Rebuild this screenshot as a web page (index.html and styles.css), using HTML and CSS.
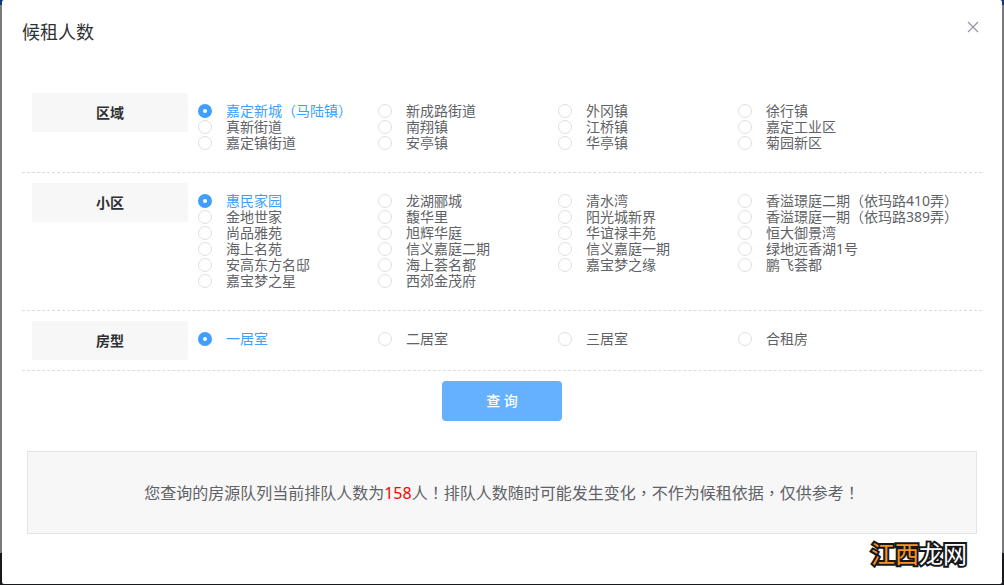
FILE: index.html
```
<!DOCTYPE html>
<html lang="zh-CN">
<head>
<meta charset="utf-8">
<title>候租人数</title>
<link rel="stylesheet" href="styles.css">
</head>
<body>
<div class="dialog" role="dialog" aria-labelledby="dialog-title">
  <header class="dialog-header">
    <h1 class="dialog-title" id="dialog-title">候租人数</h1>
    <button class="close" type="button" aria-label="关闭">
      <svg width="12" height="12" viewBox="0 0 12 12" aria-hidden="true"><path d="M1 1L11 11M11 1L1 11" fill="none" stroke="#909399" stroke-width="1.1"/></svg>
    </button>
  </header>
  <form class="filters">
    <div class="filter" role="radiogroup" aria-labelledby="l-area">
      <div class="filter-label" id="l-area">区域</div>
      <div class="options">
        <label class="option"><input type="radio" name="area" checked><span>嘉定新城<span class="mark" lang="zh-Hant">（</span>马陆镇<span class="mark" lang="zh-Hant">）</span></span></label>
        <label class="option"><input type="radio" name="area"><span>新成路街道</span></label>
        <label class="option"><input type="radio" name="area"><span>外冈镇</span></label>
        <label class="option"><input type="radio" name="area"><span>徐行镇</span></label>
        <label class="option"><input type="radio" name="area"><span>真新街道</span></label>
        <label class="option"><input type="radio" name="area"><span>南翔镇</span></label>
        <label class="option"><input type="radio" name="area"><span>江桥镇</span></label>
        <label class="option"><input type="radio" name="area"><span>嘉定工业区</span></label>
        <label class="option"><input type="radio" name="area"><span>嘉定镇街道</span></label>
        <label class="option"><input type="radio" name="area"><span>安亭镇</span></label>
        <label class="option"><input type="radio" name="area"><span>华亭镇</span></label>
        <label class="option"><input type="radio" name="area"><span>菊园新区</span></label>
      </div>
    </div>
    <div class="filter" role="radiogroup" aria-labelledby="l-estate">
      <div class="filter-label" id="l-estate">小区</div>
      <div class="options">
        <label class="option"><input type="radio" name="estate" checked><span>惠民家园</span></label>
        <label class="option"><input type="radio" name="estate"><span>龙湖郦城</span></label>
        <label class="option"><input type="radio" name="estate"><span>清水湾</span></label>
        <label class="option"><input type="radio" name="estate"><span>香溢璟庭二期<span class="mark" lang="zh-Hant">（</span>依玛路410弄<span class="mark" lang="zh-Hant">）</span></span></label>
        <label class="option"><input type="radio" name="estate"><span>金地世家</span></label>
        <label class="option"><input type="radio" name="estate"><span>馥华里</span></label>
        <label class="option"><input type="radio" name="estate"><span>阳光城新界</span></label>
        <label class="option"><input type="radio" name="estate"><span>香溢璟庭一期<span class="mark" lang="zh-Hant">（</span>依玛路389弄<span class="mark" lang="zh-Hant">）</span></span></label>
        <label class="option"><input type="radio" name="estate"><span>尚品雅苑</span></label>
        <label class="option"><input type="radio" name="estate"><span>旭辉华庭</span></label>
        <label class="option"><input type="radio" name="estate"><span>华谊禄丰苑</span></label>
        <label class="option"><input type="radio" name="estate"><span>恒大御景湾</span></label>
        <label class="option"><input type="radio" name="estate"><span>海上名苑</span></label>
        <label class="option"><input type="radio" name="estate"><span>信义嘉庭二期</span></label>
        <label class="option"><input type="radio" name="estate"><span>信义嘉庭一期</span></label>
        <label class="option"><input type="radio" name="estate"><span>绿地远香湖1号</span></label>
        <label class="option"><input type="radio" name="estate"><span>安高东方名邸</span></label>
        <label class="option"><input type="radio" name="estate"><span>海上荟名都</span></label>
        <label class="option"><input type="radio" name="estate"><span>嘉宝梦之缘</span></label>
        <label class="option"><input type="radio" name="estate"><span>鹏飞荟都</span></label>
        <label class="option"><input type="radio" name="estate"><span>嘉宝梦之星</span></label>
        <label class="option"><input type="radio" name="estate"><span>西郊金茂府</span></label>
      </div>
    </div>
    <div class="filter" role="radiogroup" aria-labelledby="l-room">
      <div class="filter-label" id="l-room">房型</div>
      <div class="options">
        <label class="option"><input type="radio" name="room" checked><span>一居室</span></label>
        <label class="option"><input type="radio" name="room"><span>二居室</span></label>
        <label class="option"><input type="radio" name="room"><span>三居室</span></label>
        <label class="option"><input type="radio" name="room"><span>合租房</span></label>
      </div>
    </div>
    <button class="search" type="button">查 询</button>
  </form>
  <p class="result">您查询的房源队列当前排队人数为<strong class="count">158</strong>人<span class="mark" lang="zh-Hant">！</span>排队人数随时可能发生变化<span class="mark" lang="zh-Hant">，</span>不作为候租依据<span class="mark" lang="zh-Hant">，</span>仅供参考<span class="mark" lang="zh-Hant">！</span></p>
  <div class="watermark"><span class="watermark-accent">江西</span>龙网</div>
</div>
</body>
</html>
```
FILE: styles.css
```
* {
  box-sizing: border-box;
}

body {
  margin: 0;
  padding: 0 2px 1px;
  min-height: 100vh;
  display: flex;
  background: linear-gradient(#0d3a75 0 5px, #7a7a7a 5px calc(100% - 32px), #17191c calc(100% - 32px));
  font-family: "Noto Sans", "Noto Sans CJK SC", sans-serif;
  font-size: 14px;
  color: #606266;
}

.dialog {
  position: relative;
  flex: 1;
  min-width: 0;
  padding: 20px 20px 50px;
  background: #fff;
  border-radius: 2px;
}

.dialog-header {
  display: flex;
  justify-content: space-between;
  align-items: flex-start;
  height: 63px;
}

.dialog-title {
  margin: 0;
  font-size: 18px;
  line-height: 24px;
  font-weight: 400;
  color: #303133;
}

.close {
  display: flex;
  margin: 0;
  padding: 1px 3px;
  border: 0;
  background: none;
  cursor: pointer;
}

.filter {
  display: flex;
  gap: 10px;
  align-items: flex-start;
  padding: 10px;
  border-bottom: 1px dashed #dcdcdc;
}

.filter-label {
  flex: none;
  width: 156px;
  background: #f7f7f7;
  color: #303133;
  font-weight: 700;
  line-height: 39px;
  text-align: center;
}

.options {
  flex: 1;
  display: grid;
  grid-template-columns: repeat(3, 180px) 1fr;
  padding: 10px 0 11px;
}

.option {
  display: flex;
  align-items: center;
  gap: 14px;
  height: 16px;
  line-height: 16px;
  white-space: nowrap;
  cursor: pointer;
}

.option input {
  appearance: none;
  flex: none;
  width: 14px;
  height: 14px;
  margin: 0;
  border: 1px solid #dcdfe6;
  border-radius: 50%;
  background: #fff;
}

.option input:checked {
  border: 5px solid #409eff;
}

.option input:checked + span {
  color: #409eff;
}

/* Full-width punctuation centred in its em box */
.mark {
  font-family: "Noto Sans CJK TC", sans-serif;
  line-height: 1;
}

.search {
  display: block;
  width: 120px;
  height: 40px;
  margin: 10px auto 30px;
  padding: 0 0 2px;
  border: 0;
  border-radius: 4px;
  background: #66b1ff;
  color: #fff;
  font: inherit;
  font-weight: 500;
  cursor: pointer;
}

.result {
  margin: 0 5px;
  padding: 30px 20px 28px;
  border: 1px solid #e4e4e4;
  background: #f7f7f7;
  font-size: 16px;
  line-height: 23px;
  text-align: center;
}

.count {
  font-weight: 400;
  color: #f00;
}

.watermark {
  position: absolute;
  right: 35px;
  bottom: 14px;
  font-size: 24px;
  line-height: 32px;
  color: #fff;
  -webkit-text-stroke: 4px #17171b;
  paint-order: stroke fill;
}

.watermark-accent {
  color: #f7931e;
}
```
